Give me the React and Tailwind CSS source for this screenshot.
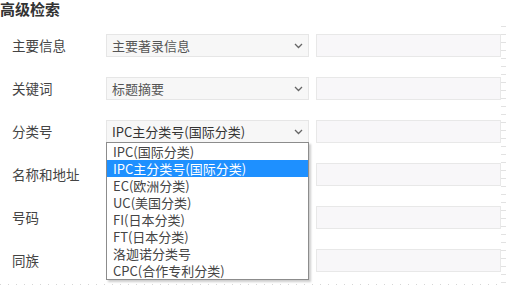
import { useState } from "react";

const rows = [
    { label: "主要信息", value: "主要著录信息" },
    { label: "关键词", value: "标题摘要" },
    { label: "分类号", value: "IPC主分类号(国际分类)", open: true },
    { label: "名称和地址", value: "" },
    { label: "号码", value: "" },
    { label: "同族", value: "" },
];

const options = [
    "IPC(国际分类)",
    "IPC主分类号(国际分类)",
    "EC(欧洲分类)",
    "UC(美国分类)",
    "FI(日本分类)",
    "FT(日本分类)",
    "洛迦诺分类号",
    "CPC(合作专利分类)",
];

const Chevron = () => (
    <svg width="9" height="6" viewBox="0 0 9 6" className="shrink-0">
        <path d="M1 1l3.5 3.5L8 1" fill="none" stroke="#666" strokeWidth="1.3" />
    </svg>
);

const App = () => {
    const [selected, setSelected] = useState(1);

    return (
        <div
            className="w-[507px] h-[287px] overflow-hidden bg-white text-[#333]"
            style={{ fontFamily: '"Noto Sans CJK SC", "Noto Sans", sans-serif' }}
        >
            <h1 className="h-[17px] leading-[17px] text-[15px] font-bold text-[#333]">高级检索</h1>

            <div className="flex">
                <div className="flex-1 flex flex-col gap-[20px] pt-[17px] pl-[12px]">
                    {rows.map((row) => (
                        <div key={row.label} className="flex items-center h-[23px]">
                            <span className="w-[94px] text-[13.5px] text-[#444]">{row.label}</span>
                            <div className="relative w-[203px] h-[23px]">
                                {row.value && (
                                    <div className="flex items-center justify-between h-full pl-[5px] pr-[5px] bg-[#f7f7f7] border border-[#e6e6e6] text-[13px] text-[#555]">
                                        <span className={row.open ? "text-[#333]" : ""}>{row.value}</span>
                                        <Chevron />
                                    </div>
                                )}
                                {row.open && (
                                    <ul className="absolute z-10 top-[22px] left-0 w-[203px] bg-white border border-[#8c8c8c] shadow-[2px_2px_2px_rgba(0,0,0,0.2)] text-[13px] text-[#444]">
                                        {options.map((opt, i) => (
                                            <li
                                                key={opt}
                                                onMouseEnter={() => setSelected(i)}
                                                className={`h-[17px] leading-[17px] pl-[6px] ${
                                                    selected === i ? "bg-[#1e90ff] text-white" : ""
                                                }`}
                                            >
                                                {opt}
                                            </li>
                                        ))}
                                    </ul>
                                )}
                            </div>
                            <div className="ml-[7px] w-[185px] h-[23px] bg-[#f8f7f9] border border-[#e8e8e8]" />
                        </div>
                    ))}
                    <div className="-ml-[12px] -mt-[8px] h-px bg-[repeating-linear-gradient(to_right,#d6d6d6_0_1px,transparent_1px_8px)]" />
                </div>
                <div className="w-[5px] mr-[1px] mt-[9px] bg-[repeating-linear-gradient(to_bottom,#e2e2e2_0_1px,transparent_1px_8px)]" />
            </div>
        </div>
    );
};

export default App;
